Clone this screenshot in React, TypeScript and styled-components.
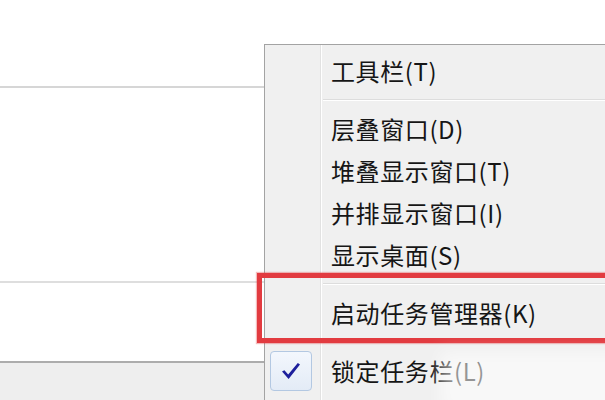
import React from 'react';
import styled, {createGlobalStyle} from 'styled-components';

const GlobalStyle = createGlobalStyle`
  html, body {
    margin: 0;
    padding: 0;
    background: #ffffff;
  }
  #root {
    width: 605px;
    height: 400px;
  }
`;

const Screen = styled.div`
  position: relative;
  width: 605px;
  height: 400px;
  overflow: hidden;
  font-family: 'Noto Sans CJK SC', 'Microsoft YaHei', sans-serif;
`;

// window behind the menu
const Backdrop = styled.div`
  display: flex;
  flex-direction: column;
  width: 100%;
  height: 100%;
  background: #ffffff;
`;

const Pane = styled.div<{$h: number}>`
  height: ${p => p.$h}px;
  flex-shrink: 0;
`;

const Rule = styled.div<{$color: string}>`
  height: 2px;
  flex-shrink: 0;
  background: ${p => p.$color};
`;

const Footer = styled.div`
  flex: 1;
  background: #eeeeee;
`;

const Menu = styled.div`
  position: absolute;
  left: 264px;
  top: 44px;
  width: 360px;
  height: 380px;
  box-sizing: border-box;
  padding-top: 5px;
  background: #f0f0f0;
  border: 1px solid #a3a3a3;
  display: flex;
  flex-direction: column;
`;

const Gutter = styled.div`
  position: absolute;
  left: 55px;
  top: 0;
  bottom: 0;
  width: 1px;
  background: #e2e2e2;
  border-right: 1px solid #ffffff;
`;

const Item = styled.div`
  position: relative;
  display: flex;
  align-items: center;
  height: 42px;
  flex-shrink: 0;
`;

const Label = styled.span`
  margin-left: 66px;
  font-size: 24px;
  letter-spacing: 0.6px;
  color: #161616;
  line-height: 1;
  white-space: nowrap;
`;

const Separator = styled.div`
  height: 16px;
  flex-shrink: 0;
  display: flex;
  align-items: center;
  padding-left: 58px;

  &::after {
    content: '';
    flex: 1;
    height: 1px;
    background: #dddddd;
    border-bottom: 1px solid #ffffff;
  }
`;

const CheckBox = styled.div`
  position: absolute;
  left: 5px;
  top: 1px;
  width: 42px;
  height: 40px;
  box-sizing: border-box;
  border: 1px solid #b3c8e2;
  border-radius: 4px;
  background: linear-gradient(#f3f7fd, #e3ebf6);
  display: flex;
  align-items: center;
  justify-content: center;
`;

const Highlight = styled.div`
  position: absolute;
  left: 257px;
  top: 273px;
  width: 380px;
  height: 70px;
  box-sizing: border-box;
  border: 5px solid #e23b40;
  box-shadow: 0 0 1px 1px rgba(226, 59, 64, 0.35);
`;

const Haze = styled.div`
  position: absolute;
  left: 440px;
  top: 352px;
  width: 190px;
  height: 60px;
  background: rgba(255, 255, 255, 0.55);
  filter: blur(8px);
`;

const items: (string | null)[] = [
  '工具栏(T)',
  null,
  '层叠窗口(D)',
  '堆叠显示窗口(T)',
  '并排显示窗口(I)',
  '显示桌面(S)',
  null,
  '启动任务管理器(K)',
  null,
  '锁定任务栏(L)',
];

function Check() {
  return (
    <svg width="20" height="18" viewBox="0 0 20 18">
      <path d="M1 9.5 L3.4 8.2 L7.2 12.6 L16.8 1 L19 2.4 L7.6 17 Z" fill="#1d1f9c" />
    </svg>
  );
}

export default function App() {
  return (
    <Screen>
      <GlobalStyle />
      <Backdrop>
        <Pane $h={86} />
        <Rule $color="#d6d6d6" />
        <Pane $h={193} />
        <Rule $color="#dedede" />
        <Pane $h={78} />
        <Rule $color="#acacac" />
        <Footer />
      </Backdrop>
      <Menu>
        <Gutter />
        {items.map((label, i) =>
          label === null ? (
            <Separator key={i} />
          ) : (
            <Item key={i}>
              {label === '锁定任务栏(L)' && (
                <CheckBox>
                  <Check />
                </CheckBox>
              )}
              <Label>{label}</Label>
            </Item>
          ),
        )}
      </Menu>
      <Highlight />
      <Haze />
    </Screen>
  );
}
